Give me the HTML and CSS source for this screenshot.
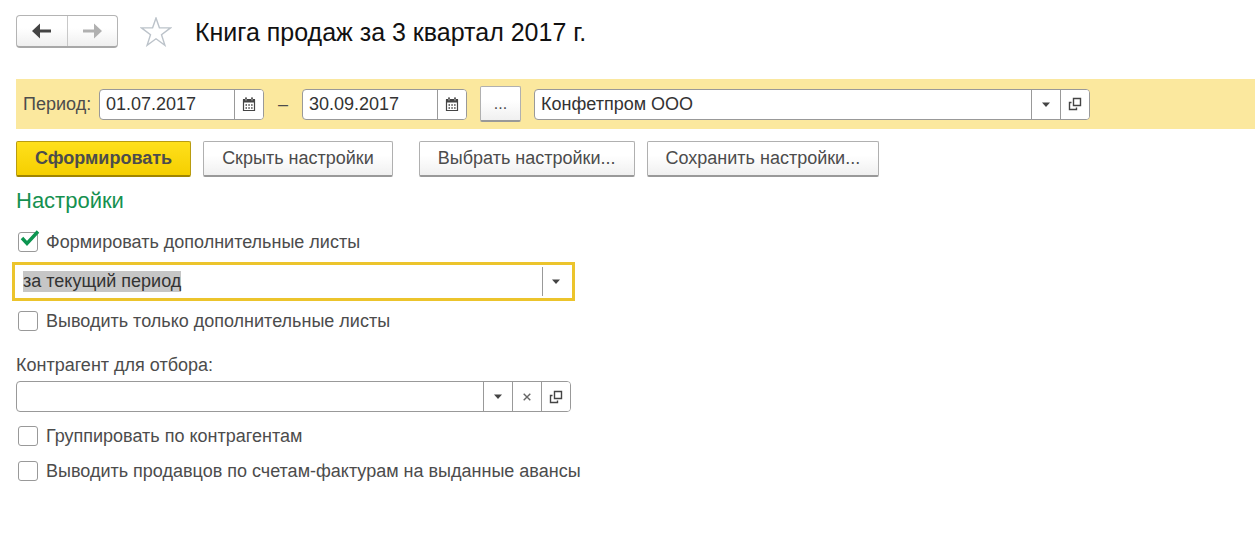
FILE: index.html
```html
<!DOCTYPE html>
<html lang="ru">
<head>
<meta charset="utf-8">
<title>Книга продаж за 3 квартал 2017 г.</title>
<link rel="stylesheet" href="styles.css">
</head>
<body>
<svg class="defs" aria-hidden="true">
  <symbol id="calendar" viewBox="0 0 14 15">
    <path d="M1.500 3h11v10.500h-11z" fill="#fff" stroke="#444" stroke-width="1.200"/>
    <path d="M1 2h12v3.500H1z" fill="#444"/>
    <path d="M4 .5v3M10 .5v3" stroke="#444" stroke-width="2"/>
    <path d="M4 1.500v2M10 1.500v2" stroke="#fff" stroke-width=".7"/>
    <path d="M3.500 8h8M3.500 11h8" stroke="#444" stroke-width="1.500" stroke-dasharray="1.500 1.300"/>
  </symbol>
  <symbol id="arrow" viewBox="0 0 8 5"><path d="M0 .5h8L4 5z" fill="#444"/></symbol>
  <symbol id="open" viewBox="0 0 14 14">
    <path d="M5.500 1.500h7v7h-7z" fill="none" stroke="#444" stroke-width="1.400"/>
    <path d="M3.500 5.500h-2v7h7v-2" fill="none" stroke="#444" stroke-width="1.400"/>
  </symbol>
  <symbol id="clear" viewBox="0 0 8 8"><path d="M.7.7l6.600 6.600M7.300.7L.7 7.300" stroke="#666" stroke-width="1.400"/></symbol>
</svg>

<header class="header">
  <div class="nav">
    <button type="button" aria-label="Назад"><svg width="20" height="16" viewBox="0 0 20 16"><path d="M0 8l8-7.500v6H19v3H8v6z" fill="#444"/></svg></button>
    <button type="button" aria-label="Вперед"><svg width="20" height="16" viewBox="0 0 20 16"><path d="M20 8l-8-7.500v6H1v3h11v6z" fill="#b0b0b0"/></svg></button>
  </div>
  <button type="button" class="star" aria-label="В избранное"><svg width="32" height="30" viewBox="0 0 32 30"><path d="M16 1l3.400 9.800 11.100.1-9 6.800 3.400 10.600L16 21.800l-8.900 6.500 3.400-10.600-9-6.800 11.100-.1z" fill="#fff" stroke="#bcc3ca" stroke-width="1.400"/></svg></button>
  <h1>Книга продаж за 3 квартал 2017 г.</h1>
</header>

<section class="period">
  <label for="from">Период:</label>
  <div class="field date">
    <input id="from" type="text" value="01.07.2017">
    <button type="button" aria-label="Календарь"><svg width="14" height="15"><use href="#calendar"/></svg></button>
  </div>
  <span class="dash">–</span>
  <div class="field date">
    <input type="text" value="30.09.2017" aria-label="Конец периода">
    <button type="button" aria-label="Календарь"><svg width="14" height="15"><use href="#calendar"/></svg></button>
  </div>
  <button type="button" class="btn more">...</button>
  <div class="field company">
    <input type="text" value="Конфетпром ООО" aria-label="Организация">
    <button type="button" aria-label="Список"><svg width="8" height="5"><use href="#arrow"/></svg></button>
    <button type="button" aria-label="Открыть"><svg width="14" height="14"><use href="#open"/></svg></button>
  </div>
</section>

<div class="actions">
  <button type="button" class="btn primary">Сформировать</button>
  <button type="button" class="btn">Скрыть настройки</button>
  <button type="button" class="btn">Выбрать настройки...</button>
  <button type="button" class="btn">Сохранить настройки...</button>
</div>

<main class="settings">
  <h2>Настройки</h2>
  <label class="check"><input type="checkbox" checked><svg class="tick" width="20" height="18" viewBox="0 0 20 18"><path d="M2 8l5 5.500L18 1.500" fill="none" stroke="#0c9550" stroke-width="3.400"/></svg><span>Формировать дополнительные листы</span></label>
  <div class="combo">
    <input id="range" type="text" value="за текущий период" aria-label="Период дополнительных листов">
    <button type="button" aria-label="Список"><svg width="8" height="5"><use href="#arrow"/></svg></button>
  </div>
  <label class="check"><input type="checkbox"><span>Выводить только дополнительные листы</span></label>
  <label class="caption" for="partner">Контрагент для отбора:</label>
  <div class="field partner">
    <input id="partner" type="text">
    <button type="button" aria-label="Список"><svg width="8" height="5"><use href="#arrow"/></svg></button>
    <button type="button" aria-label="Очистить"><svg width="8" height="8"><use href="#clear"/></svg></button>
    <button type="button" aria-label="Открыть"><svg width="14" height="14"><use href="#open"/></svg></button>
  </div>
  <label class="check"><input type="checkbox"><span>Группировать по контрагентам</span></label>
  <label class="check last"><input type="checkbox"><span>Выводить продавцов по счетам-фактурам на выданные авансы</span></label>
</main>
<script src="script.js"></script>
</body>
</html>
```
FILE: styles.css
```css
* { box-sizing: border-box; }
body {
  margin: 0;
  padding: 15px 0 16px 16px;
  background: #fff;
  color: #4c4c4c;
  font: 18px/20px "Liberation Sans", Arial, sans-serif;
}
button, input { font: inherit; color: inherit; margin: 0; }
button { display: flex; align-items: center; justify-content: center; padding: 0; }
.defs { display: none; }
h1, h2 { margin: 0; font-weight: normal; }

.header { display: flex; align-items: center; height: 33px; }
.nav {
  display: flex;
  width: 102px;
  height: 33px;
  border: 1px solid #b4b4b4;
  border-bottom: 2px solid #a8a8a8;
  border-radius: 4px;
  background: linear-gradient(#fff 40%, #efefef);
}
.nav button { flex: 1; border: 0; background: none; }
.nav button + button { border-left: 1px solid #c8c8c8; }
.star { margin: 0 23px 0 22px; border: 0; background: none; }
h1 { font-size: 25px; line-height: 32px; color: #111; }

.period {
  display: flex;
  align-items: center;
  height: 50px;
  margin-top: 31px;
  padding-left: 7px;
  background: #fbe89e;
}
.period label { width: 76px; }
.dash { width: 38px; text-align: center; }
.field {
  display: flex;
  height: 31px;
  border: 1px solid #999;
  border-radius: 4px;
  background: #fff;
  overflow: hidden;
}
.field input {
  flex: 1;
  min-width: 0;
  padding: 0 6px;
  border: 0;
  outline: 0;
  background: none;
  color: #333;
}
.field button { width: 29px; border: 0; border-left: 1px solid #999; background: #fff; }
.date { width: 165px; }
.company { width: 556px; }

.btn {
  height: 36px;
  padding: 0 18px 2px;
  border: 1px solid #b0b0b0;
  border-bottom: 2px solid #999;
  border-radius: 2px;
  background: linear-gradient(#fff 40%, #f0f0f0);
  white-space: nowrap;
}
.more { width: 41px; margin: 0 13px; padding: 0; font-size: 16px; }
.actions { display: flex; gap: 12px; margin-top: 12px; }
.primary {
  border-color: #b99c10;
  border-bottom-color: #a08500;
  background: linear-gradient(#ffe01c, #f5cf00);
  font-weight: bold;
}
.primary + .btn { margin-right: 14px; }

.settings { display: flex; flex-direction: column; align-items: flex-start; }
h2 { margin-top: 11px; font-size: 22px; line-height: 26px; color: #159150; }
.check { display: flex; align-items: center; gap: 8px; height: 22px; margin-top: 17px; position: relative; }
.check input {
  appearance: none;
  width: 20px;
  height: 20px;
  margin-left: 2px;
  border: 1px solid #999;
  border-radius: 3px;
  background: #fff;
}
.tick { position: absolute; left: 4px; top: -1px; pointer-events: none; }
.combo {
  display: flex;
  align-items: center;
  width: 563px;
  max-width: 100%;
  height: 39px;
  margin: 9px 0 -8px -4px;
  border: 3px solid #ecc42c;
  background: #fff;
}
.combo input { flex: 1; min-width: 0; height: 29px; padding: 0 8px; border: 0; outline: 0; background: none; color: #333; }
.combo input::selection { background: #c6c6c6; color: #333; }
.combo button { width: 30px; height: 29px; padding-right: 4px; border: 0; border-left: 1px solid #999; background: none; }
.caption { margin-top: 23px; }
.partner { width: 555px; max-width: 100%; margin: 6px 0 -4px; }
.last { margin-top: 13px; }
```
FILE: script.js
```js
const range = document.getElementById("range");
range.focus();
range.select();
```
